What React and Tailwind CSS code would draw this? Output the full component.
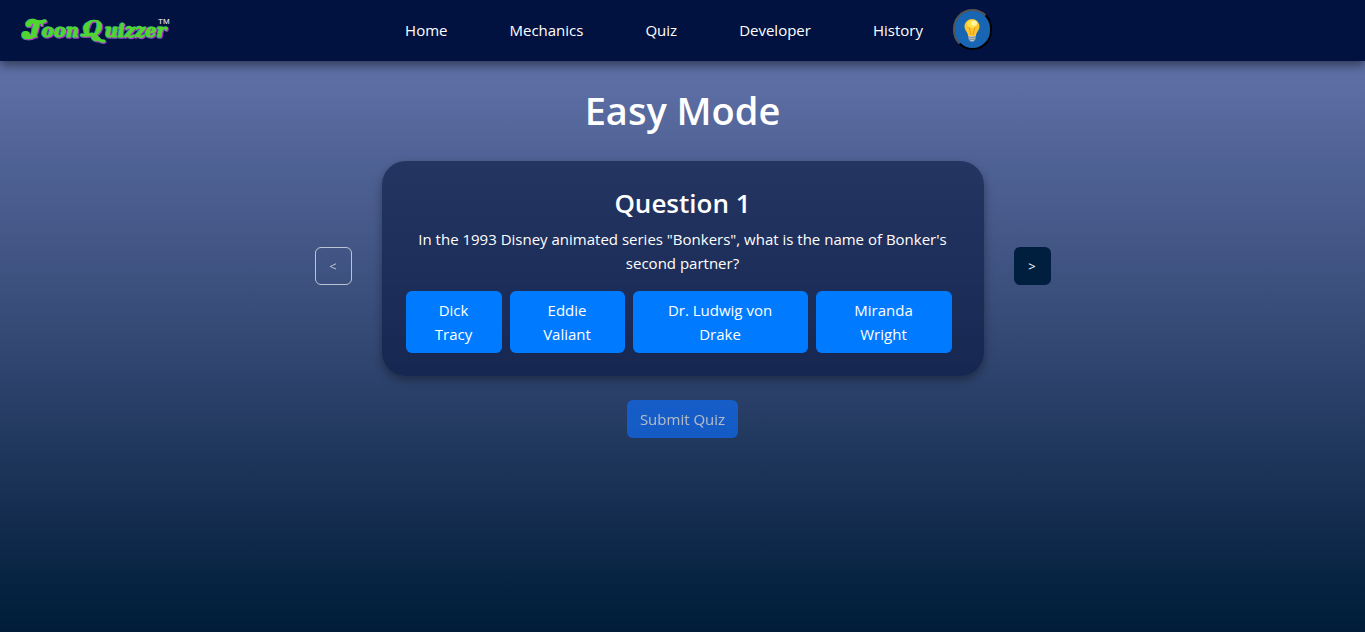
const links = ['Home', 'Mechanics', 'Quiz', 'Developer', 'History'];
const answers = [
  { text: 'Dick Tracy', width: 'w-24' },
  { text: 'Eddie Valiant', width: 'w-[115px]' },
  { text: 'Dr. Ludwig von Drake', width: 'w-[175px]' },
  { text: 'Miranda Wright', width: 'w-[136px]' },
];

function Logo() {
  return (
    <svg width="156" height="34" viewBox="0 0 156 34" overflow="visible" role="img" aria-label="ToonQuizzer">
      <g
        className="[filter:drop-shadow(1px_1px_0_#b52bd0)_drop-shadow(-1px_0_0_#1f9fa8)]"
        fill="#50d62e"
        stroke="#50d62e"
        strokeLinejoin="round"
        strokeLinecap="round"
        fontFamily="'DejaVu Serif', serif"
        fontWeight="bold"
        fontStyle="italic"
        fontSize="18"
      >
        <text x="7" y="21" fontSize="20" strokeWidth="0.5">T</text>
        <text x="22" y="21" strokeWidth="1">oon</text>
        <text x="63" y="20" fontSize="22" strokeWidth="0.5">Q</text>
        <text x="85" y="21" strokeWidth="1">uizzer</text>
        <circle cx="6" cy="19" r="4" strokeWidth="0" />
        <circle cx="9" cy="8" r="3" strokeWidth="0" />
        <path d="M6 21Q14 23 16 14L18 7" fill="none" strokeWidth="4" />
        <path d="M8 9Q8 4 14 4.500Q20 7 25 5" fill="none" strokeWidth="3.500" />
        <path d="M67 8Q63 13 67 14M62 19Q69 20 72 18Q76 19 78 22Q81 26 84 25" fill="none" strokeWidth="3" />
      </g>
      <text x="138" y="8" fill="#fff" fontSize="8" fontFamily="'Liberation Sans', sans-serif">TM</text>
    </svg>
  );
}

function Bulb() {
  return (
    <svg width="18" height="26" viewBox="0 0 18 26" aria-hidden="true">
      <path d="M9 2a7.500 7.500 0 0 0-7.500 7.500c0 4 3.500 5.500 3.500 9.500h8c0-4 3.500-5.500 3.500-9.500A7.500 7.500 0 0 0 9 2z" fill="#fdc52e" />
      <path d="M6 10l2 8M12 10l-2 8" stroke="#e79a21" fill="none" />
      <ellipse cx="9" cy="7" rx="5" ry="4" fill="#ffe14a" />
      <ellipse cx="11" cy="6" rx="3" ry="2.500" fill="#fff6a8" />
      <path d="M5.500 19h7v3l-2 2.500h-3l-2-2.500z" fill="#b9c4c9" />
      <path d="M6 21l6-1M6 23l6-1" stroke="#7f8d95" />
    </svg>
  );
}

export default function App() {
  return (
    <div className="min-h-screen bg-linear-to-b from-[#697ab3] via-[#384c79] via-50% to-[#001c38] font-['Open_Sans','Noto_Sans',sans-serif] text-[15px] leading-6 text-white">
      <header className="relative flex h-[61px] items-center justify-center bg-[#021240] pb-[2px] shadow-[0_4px_10px_rgba(0,0,0,0.5)]">
        <a href="#home" className="absolute left-5 top-4"><Logo /></a>
        <nav className="flex items-center gap-[62px] pl-8">
          {links.map((name) => (
            <a key={name} href={'#' + name.toLowerCase()}>{name}</a>
          ))}
          <button type="button" aria-label="Toggle theme" className="-ml-8 flex h-[41px] w-[39px] items-center justify-center rounded-full border-2 border-t-[#545454] border-r-black border-b-black border-l-[#545454] bg-[#1765b3]"><Bulb /></button>
        </nav>
      </header>
      <main className="flex flex-col items-center px-4 pt-[25px]">
        <h1 className="text-[38px] leading-[48px] font-semibold">Easy Mode</h1>
        <div className="mt-[27px] flex items-center gap-[30px]">
          <button type="button" disabled aria-label="Previous question" className="mb-[6px] h-[38px] w-[37px] rounded-md border border-white text-[13px] opacity-65">&lt;</button>
          <section className="w-full max-w-[602px] rounded-3xl bg-[rgba(6,20,62,0.58)] p-6 pb-[23px] text-center shadow-[0_4px_10px_rgba(0,0,0,0.35)]">
            <h2 className="text-[26px] leading-9 font-semibold">Question 1</h2>
            <p className="mt-[6px]">In the 1993 Disney animated series "Bonkers", what is the name of Bonker's second partner?</p>
            <div className="mt-4 flex gap-2">
              {answers.map(({ text, width }) => (
                <button key={text} type="button" className={`${width} rounded-md bg-[#007bff] px-6 py-[7px]`}>{text}</button>
              ))}
            </div>
          </section>
          <button type="button" aria-label="Next question" className="mb-[6px] h-[38px] w-[37px] rounded-md bg-[#001f3f] text-[13px]">&gt;</button>
        </div>
        <button type="button" disabled className="mt-6 h-[38px] rounded-md bg-[#0d6efd] px-[13px] opacity-65">Submit Quiz</button>
      </main>
    </div>
  );
}
